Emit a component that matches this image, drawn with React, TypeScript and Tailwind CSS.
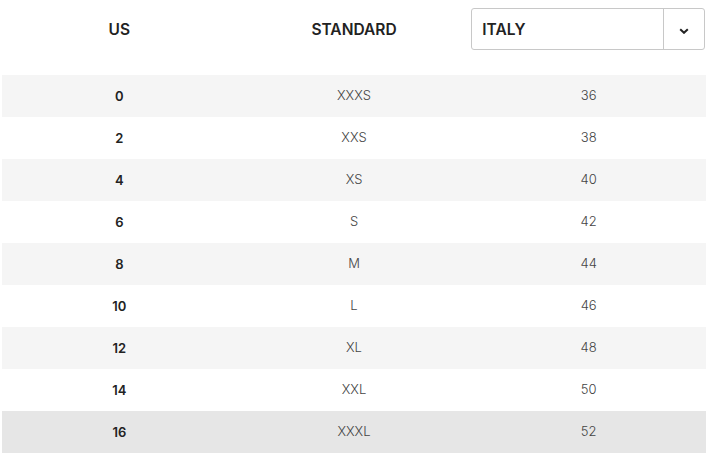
import React from 'react';

const ROWS: [string, string, string][] = [
  ['0', 'XXXS', '36'],
  ['2', 'XXS', '38'],
  ['4', 'XS', '40'],
  ['6', 'S', '42'],
  ['8', 'M', '44'],
  ['10', 'L', '46'],
  ['12', 'XL', '48'],
  ['14', 'XXL', '50'],
  ['16', 'XXXL', '52'],
];

export default function App() {
  return (
    <div className="w-[711px] h-[456px] bg-white font-['Inter',sans-serif] text-[#222]">
      <div className="mx-[2px] w-[704px]">
        {/* header */}
        <div className="grid grid-cols-3 h-[75px] items-start">
          <div className="h-[60px] flex items-center justify-center text-[15.5px] font-semibold">US</div>
          <div className="h-[60px] flex items-center justify-center text-[15.5px] font-semibold">STANDARD</div>
          <div className="pt-[8px]">
            <div className="flex h-[42px] w-[234px] border border-[#c8c8c8] rounded-[3px] bg-white">
              <div className="flex-1 flex items-center pl-[10px] pt-[1px] text-[15.5px] font-semibold">ITALY</div>
              <div className="w-[41px] border-l border-[#c8c8c8] flex items-center justify-center pt-[3px]">
                <svg width="10" height="6" viewBox="0 0 10 6" fill="none">
                  <path d="M1.2 1.2 5 4.8 8.8 1.2" stroke="#222" strokeWidth="2" />
                </svg>
              </div>
            </div>
          </div>
        </div>
        {/* rows */}
        {ROWS.map(([us, std, it], i) => (
          <div
            key={us}
            className={`grid grid-cols-3 h-[42px] items-center text-[13px] ${
              i === ROWS.length - 1 ? 'bg-[#e6e6e6]' : i % 2 === 0 ? 'bg-[#f5f5f5]' : 'bg-white'
            }`}
          >
            <div className="text-center font-semibold pt-[2px]">{us}</div>
            <div className="text-center font-light text-[#444]">{std}</div>
            <div className="text-center font-light text-[#444]">{it}</div>
          </div>
        ))}
      </div>
    </div>
  );
}
